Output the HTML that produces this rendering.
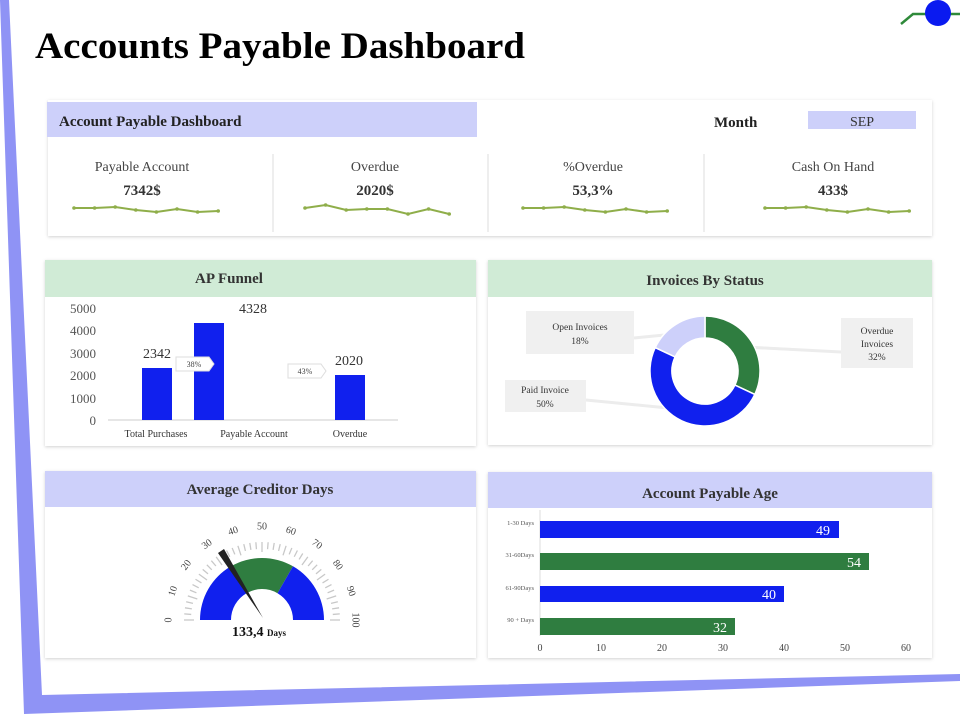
<!DOCTYPE html>
<html><head><meta charset="utf-8"><style>
html,body{margin:0;padding:0;background:#fff;width:960px;height:720px;overflow:hidden}
svg{display:block}
text{font-family:"Liberation Serif",serif}
</style></head><body>
<svg id="s" width="960" height="720" viewBox="0 0 960 720" xmlns="http://www.w3.org/2000/svg">
<defs>
<filter id="sh" x="-5%" y="-5%" width="110%" height="115%"><feDropShadow dx="0" dy="1" stdDeviation="1.5" flood-color="#000" flood-opacity="0.18"/></filter>
</defs>
<polygon points="0,0 9,0 42,695 960,674 960,681 24,714" fill="#8f93f5"/>
<polyline points="901,24 913,14 960,14" fill="none" stroke="#2f8a3a" stroke-width="2.5"/>
<circle cx="938" cy="13" r="13" fill="#0a1af0"/>
<text x="35" y="58" font-size="37" font-weight="bold" fill="#000" textLength="490" lengthAdjust="spacingAndGlyphs">Accounts Payable Dashboard</text>

<rect x="48" y="100" width="884" height="136" fill="#fff" filter="url(#sh)"/>
<rect x="47" y="102" width="430" height="35" fill="#cdd0fa"/>
<text x="59" y="126" font-size="15" font-weight="bold" fill="#222">Account Payable Dashboard</text>
<text x="714" y="127" font-size="15" font-weight="bold" fill="#222">Month</text>
<rect x="808" y="111" width="108" height="18" fill="#cdd0fa"/>
<text x="862" y="126" font-size="14" fill="#333" text-anchor="middle">SEP</text>
<g stroke="#ddd" stroke-width="1"><line x1="273" y1="154" x2="273" y2="232"/><line x1="488" y1="154" x2="488" y2="232"/><line x1="704" y1="154" x2="704" y2="232"/></g>
<g font-size="14" fill="#444" text-anchor="middle">
<text x="142" y="171">Payable Account</text><text x="375" y="171">Overdue</text><text x="593" y="171">%Overdue</text><text x="833" y="171">Cash On Hand</text>
</g>
<g font-size="15" font-weight="bold" fill="#333" text-anchor="middle">
<text x="142" y="195">7342$</text><text x="375" y="195">2020$</text><text x="593" y="195">53,3%</text><text x="833" y="195">433$</text>
</g>
<g id="spark" fill="none" stroke="#8fae4a" stroke-width="2"></g>

<rect x="45" y="260" width="431" height="186" fill="#fff" filter="url(#sh)"/>
<rect x="45" y="260" width="431" height="37" fill="#d0ebd6"/>
<text x="229" y="283" font-size="15" font-weight="bold" fill="#333" text-anchor="middle">AP Funnel</text>
<g font-size="13" fill="#555" text-anchor="end">
<text x="96" y="313">5000</text><text x="96" y="335">4000</text><text x="96" y="358">3000</text><text x="96" y="380">2000</text><text x="96" y="403">1000</text><text x="96" y="425">0</text>
</g>
<line x1="108" y1="420" x2="398" y2="420" stroke="#ccc"/>
<rect x="142" y="368" width="30" height="52" fill="#1020ee"/>
<rect x="194" y="323" width="30" height="97" fill="#1020ee"/>
<rect x="335" y="375" width="30" height="45" fill="#1020ee"/>
<g font-size="14" fill="#333" text-anchor="middle">
<text x="157" y="358">2342</text><text x="253" y="313">4328</text><text x="349" y="365">2020</text>
</g>
<polygon points="176,357 209,357 214,364 209,371 176,371" fill="#fff" stroke="#ddd"/>
<text x="194" y="367" font-size="8" fill="#444" text-anchor="middle">38%</text>
<polygon points="288,364 321,364 326,371 321,378 288,378" fill="#fff" stroke="#ddd"/>
<text x="305" y="374" font-size="8" fill="#444" text-anchor="middle">43%</text>
<g font-size="10" fill="#333" text-anchor="middle">
<text x="156" y="437">Total Purchases</text><text x="254" y="437">Payable Account</text><text x="350" y="437">Overdue</text>
</g>

<rect x="488" y="260" width="444" height="185" fill="#fff" filter="url(#sh)"/>
<rect x="488" y="260" width="444" height="37" fill="#d0ebd6"/>
<text x="705" y="285" font-size="15" font-weight="bold" fill="#333" text-anchor="middle">Invoices By Status</text>
<g stroke="#ececec" stroke-width="3">
<line x1="634" y1="338" x2="685" y2="333"/><line x1="586" y1="400" x2="688" y2="410"/><line x1="841" y1="352" x2="745" y2="347"/>
</g>
<g stroke="#fff" stroke-width="1.5">
<path d="M705,316 A55,55 0 0 1 754.8,394.4 L734.9,385.1 A33,33 0 0 0 705,338 Z" fill="#2f7d40"/>
<path d="M754.8,394.4 A55,55 0 0 1 655.2,347.6 L675.1,356.9 A33,33 0 0 0 734.9,385.1 Z" fill="#1020ee"/>
<path d="M655.2,347.6 A55,55 0 0 1 705,316 L705,338 A33,33 0 0 0 675.1,356.9 Z" fill="#cdd0fa"/>
</g>
<rect x="526" y="311" width="108" height="43" fill="#f0f0f0"/>
<text x="580" y="330" font-size="9.5" fill="#333" text-anchor="middle">Open Invoices</text>
<text x="580" y="344" font-size="9.5" fill="#333" text-anchor="middle">18%</text>
<rect x="505" y="380" width="81" height="32" fill="#f0f0f0"/>
<text x="545" y="393" font-size="9.5" fill="#333" text-anchor="middle">Paid Invoice</text>
<text x="545" y="407" font-size="9.5" fill="#333" text-anchor="middle">50%</text>
<rect x="841" y="318" width="72" height="50" fill="#f0f0f0"/>
<text x="877" y="334" font-size="9.5" fill="#333" text-anchor="middle">Overdue</text>
<text x="877" y="347" font-size="9.5" fill="#333" text-anchor="middle">Invoices</text>
<text x="877" y="360" font-size="9.5" fill="#333" text-anchor="middle">32%</text>

<rect x="45" y="471" width="431" height="187" fill="#fff" filter="url(#sh)"/>
<rect x="45" y="471" width="431" height="36" fill="#cdd0fa"/>
<text x="260" y="494" font-size="15" font-weight="bold" fill="#333" text-anchor="middle">Average Creditor Days</text>
<g id="ticks"></g>
<path d="M200,620 A62,62 0 0 1 231,566.3 L246.5,593.2 A31,31 0 0 0 231,620 Z" fill="#1020ee"/>
<path d="M231,566.3 A62,62 0 0 1 293,566.3 L277.5,593.2 A31,31 0 0 0 246.5,593.2 Z" fill="#2f7d40"/>
<path d="M293,566.3 A62,62 0 0 1 324,620 L293,620 A31,31 0 0 0 277.5,593.2 Z" fill="#1020ee"/>
<polygon points="218,553 224,549 263,618" fill="#222"/>
<text x="232" y="636" font-size="14" font-weight="bold" fill="#111">133,4 <tspan font-size="9">Days</tspan></text>

<rect x="488" y="472" width="444" height="186" fill="#fff" filter="url(#sh)"/>
<rect x="488" y="472" width="444" height="36" fill="#cdd0fa"/>
<text x="710" y="498" font-size="15" font-weight="bold" fill="#333" text-anchor="middle">Account Payable Age</text>
<line x1="540" y1="510" x2="540" y2="636" stroke="#ddd"/>
<rect x="540" y="521" width="299" height="17" fill="#1020ee"/>
<rect x="540" y="553" width="329" height="17" fill="#2f7d40"/>
<rect x="540" y="586" width="244" height="16" fill="#1020ee"/>
<rect x="540" y="618" width="195" height="17" fill="#2f7d40"/>
<g font-size="14" fill="#fff" text-anchor="end">
<text x="830" y="535">49</text><text x="861" y="567">54</text><text x="776" y="599">40</text><text x="727" y="632">32</text>
</g>
<g font-size="6.5" fill="#555" text-anchor="end">
<text x="534" y="525">1-30 Days</text><text x="534" y="557">31-60Days</text><text x="534" y="590">61-90Days</text><text x="534" y="622">90 + Days</text>
</g>
<g font-size="10" fill="#444" text-anchor="middle">
<text x="540" y="651">0</text><text x="601" y="651">10</text><text x="662" y="651">20</text><text x="723" y="651">30</text><text x="784" y="651">40</text><text x="845" y="651">50</text><text x="906" y="651">60</text>
</g>
</svg>
<script>
var g=document.getElementById('ticks'),cx=262,cy=620,h='';
for(var v=0;v<=100;v+=2.5){var t=(180-1.8*v)*Math.PI/180,c=Math.cos(t),s=Math.sin(t);var r1=v%10==0?68:71,r2=78;
h+='<line x1="'+(cx+r1*c)+'" y1="'+(cy-r1*s)+'" x2="'+(cx+r2*c)+'" y2="'+(cy-r2*s)+'" stroke="#c8c8c8" stroke-width="1.3"/>';}
for(var v=0;v<=100;v+=10){var t=(180-1.8*v)*Math.PI/180,x=cx+93*Math.cos(t),y=cy-93*Math.sin(t),rot=1.8*v-90;
h+='<text x="'+x+'" y="'+y+'" font-size="10" fill="#444" text-anchor="middle" dominant-baseline="middle" transform="rotate('+rot+' '+x+' '+y+')">'+v+'</text>';}
g.innerHTML=h;
var sets=[[74,[208,208,207,210,212,209,212,211]],[305,[208,205,210,209,209,214,209,214]],[523,[208,208,207,210,212,209,212,211]],[765,[208,208,207,210,212,209,212,211]]],sp='';
sets.forEach(function(a){var pts=a[1].map(function(y,i){return (a[0]+i*20.6)+','+y;});
sp+='<polyline points="'+pts.join(' ')+'"/>';
pts.forEach(function(p){var q=p.split(',');sp+='<circle cx="'+q[0]+'" cy="'+q[1]+'" r="1.8" fill="#8fae4a" stroke="none"/>';});});
document.getElementById('spark').innerHTML=sp;
</script>
</body></html>
